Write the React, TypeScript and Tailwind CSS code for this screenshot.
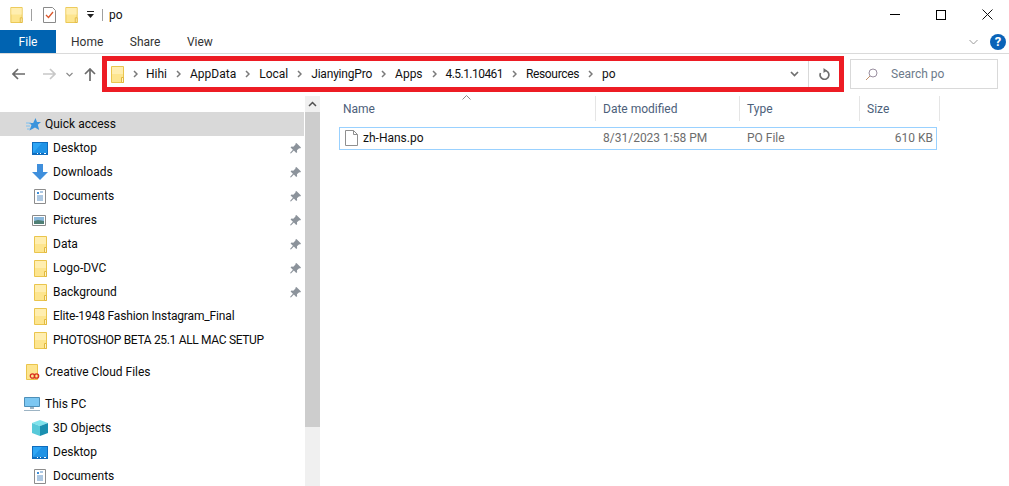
const font = "font-['Roboto',sans-serif]"

function Folder({ className = 'w-[13px] h-[17px]' }: { className?: string }) {
  return (
    <svg viewBox="0 0 13 17" className={`shrink-0 ${className}`}>
      <path d="M.5.5h12v16H.5z" fill="#fde58f" stroke="#eac54d" />
      <path d="M1 1h11v7H1z" fill="#ffeeb0" />
      <path d="M10.500 16.500v-5h2v5z" fill="#fff3c4" stroke="#e2b93e" />
    </svg>
  )
}

function Chevron() {
  return (
    <svg viewBox="0 0 5 8" className="w-[5px] h-[8px] shrink-0">
      <path d="M1 1l3 3-3 3" fill="none" stroke="#7a7a7a" strokeWidth="1.500" />
    </svg>
  )
}

function Pin() {
  return (
    <svg viewBox="0 0 12 12" className="w-[11px] h-[11px] shrink-0">
      <path d="M7 0l5 5-1 1-1-.4L7.600 8l.2 2-1 1-2.600-2.800L1 11.500 0 11l3.200-3.600L.6 4.800l1-1 2 .2L6 1.600 5.800.8z" fill="#8c939b" />
    </svg>
  )
}

function DesktopIcon() {
  return (
    <svg viewBox="0 0 16 13" className="w-[16px] h-[13px] shrink-0">
      <path d="M0 0h16v13H0z" fill="#0f6cbd" />
      <path d="M1 1h14v10H1z" fill="#2ea6f5" />
      <path d="M1 11L10 1h5v10z" fill="#1f93e6" />
      <path d="M5 11.500h1M8 11.500h1M12 11.500h2" stroke="#fff" />
    </svg>
  )
}

function DownloadsIcon() {
  return (
    <svg viewBox="0 0 16 16" className="w-[16px] h-[16px] shrink-0">
      <path d="M5 0h6v8h5l-8 8-8-8h5z" fill="#3f8fdc" />
    </svg>
  )
}

function DocumentsIcon() {
  return (
    <svg viewBox="0 0 12 15" className="w-[12px] h-[15px] shrink-0 ml-[2px]">
      <path d="M.5.5h11v14H.5z" fill="#fff" stroke="#8c8c8c" />
      <path d="M3 3h2v2H3z" fill="#3d8ed8" />
      <path d="M6 3h3M3 7h6M3 9h6M3 11h6" stroke="#5b90c4" />
    </svg>
  )
}

function PicturesIcon() {
  return (
    <svg viewBox="0 0 14 11" className="w-[14px] h-[11px] shrink-0">
      <path d="M.5.5h13v10H.5z" fill="#fff" stroke="#8a8a8a" />
      <path d="M2 2h10v4H2z" fill="#8ab8dc" />
      <path d="M2 6l4-1 6 1v3H2z" fill="#4f7f74" />
    </svg>
  )
}

function QuickIcon() {
  return (
    <svg viewBox="0 0 15 13" className="w-[15px] h-[13px] shrink-0 ml-[2px]">
      <path d="M9.500 0l1.500 4h4l-3.200 2.800L13.200 12 9 9.400 3.500 12.500l2-5.500L3 5h4.200z" fill="#3b94dc" />
      <path d="M0 5h5M0 8h4M1 11h3" stroke="#7cc0f0" />
    </svg>
  )
}

function CloudFolderIcon() {
  return (
    <svg viewBox="0 0 14 16" className="w-[14px] h-[16px] shrink-0 ml-[2px]">
      <path d="M.5.5h11v15H.5z" fill="#fde58f" stroke="#eac54d" />
      <circle cx="6.500" cy="12" r="2.200" fill="none" stroke="#d9301f" strokeWidth="1.300" />
      <circle cx="10.500" cy="12" r="2.200" fill="none" stroke="#d9301f" strokeWidth="1.300" />
    </svg>
  )
}

function PcIcon() {
  return (
    <svg viewBox="0 0 16 14" className="w-[16px] h-[14px] shrink-0">
      <path d="M.5.5h15v9H.5z" fill="#7cc7f2" stroke="#4d8fb8" />
      <path d="M6 10h4v2H6z" fill="#9db4c4" />
      <path d="M0 13.500h16" stroke="#9db4c4" />
    </svg>
  )
}

function CubeIcon() {
  return (
    <svg viewBox="0 0 16 16" className="w-[16px] h-[16px] shrink-0">
      <path d="M8 0l8 3-8 3-8-3z" fill="#7fe3ec" />
      <path d="M0 3l8 3v10l-8-3z" fill="#57c9d9" />
      <path d="M16 3L8 6v10l8-3z" fill="#1a8fb0" />
    </svg>
  )
}

function NavRow({ icon, label, pinned, active, indent = true, tight = '' }: { icon: React.ReactNode; label: string; pinned?: boolean; active?: boolean; indent?: boolean; tight?: string }) {
  return (
    <div className={`flex items-center h-6 shrink-0 ${active ? 'bg-[#d9d9d9]' : ''} ${indent ? 'pl-[32px]' : 'pl-[24px]'} pr-[3px]`}>
      <div className="w-[21px] flex justify-start items-center">{icon}</div>
      <span className={`flex-1 whitespace-nowrap text-[#0b0b0b] ${tight}`}>{label}</span>
      {pinned && <Pin />}
    </div>
  )
}

const folderIcon = <Folder className="w-[13px] h-[17px] ml-[2px]" />

function Sidebar() {
  return (
    <div className="w-[320px] shrink-0 flex overflow-hidden">
      <div className="w-[304px] flex flex-col pt-[16px] overflow-hidden">
        <NavRow icon={<QuickIcon />} label="Quick access" active indent={false} />
        <NavRow icon={<DesktopIcon />} label="Desktop" pinned />
        <NavRow icon={<DownloadsIcon />} label="Downloads" pinned />
        <NavRow icon={<DocumentsIcon />} label="Documents" pinned />
        <NavRow icon={<PicturesIcon />} label="Pictures" pinned />
        <NavRow icon={folderIcon} label="Data" pinned />
        <NavRow icon={folderIcon} label="Logo-DVC" pinned />
        <NavRow icon={folderIcon} label="Background" pinned />
        <NavRow icon={folderIcon} label="Elite-1948 Fashion Instagram_Final" tight="tracking-[-0.15px]" />
        <NavRow icon={folderIcon} label="PHOTOSHOP BETA 25.1 ALL MAC SETUP" tight="tracking-[-0.33px]" />
        <div className="h-2 shrink-0" />
        <NavRow icon={<CloudFolderIcon />} label="Creative Cloud Files" indent={false} />
        <div className="h-2 shrink-0" />
        <NavRow icon={<PcIcon />} label="This PC" indent={false} />
        <NavRow icon={<CubeIcon />} label="3D Objects" />
        <NavRow icon={<DesktopIcon />} label="Desktop" />
        <NavRow icon={<DocumentsIcon />} label="Documents" />
      </div>
      <div className="ml-px w-[15px] bg-[#f0f0f0] flex flex-col">
        <div className="h-4 flex items-center justify-center">
          <svg viewBox="0 0 9 6" className="w-[9px] h-[6px]">
            <path d="M1 5l3.500-3.500L8 5" fill="none" stroke="#505050" strokeWidth="1.500" />
          </svg>
        </div>
        <div className="h-[315px] bg-[#cdcdcd]" />
      </div>
    </div>
  )
}

const columns = [
  { label: 'Date modified', width: 'w-[144px]' },
  { label: 'Type', width: 'w-[120px]' },
  { label: 'Size', width: 'w-[80px]' },
]

function FileList() {
  return (
    <div className="flex-1 flex flex-col pl-[19px] min-w-0">
      <div className="relative flex h-[25px] text-[#4c607a]">
        <div className="w-[257px] pl-[4px] pt-[5px] border-r border-[#e5e5e5]">Name</div>
        {columns.map((col) => (
          <div key={col.label} className={`${col.width} pl-[7px] pt-[5px] border-r border-[#e5e5e5]`}>{col.label}</div>
        ))}
        <svg viewBox="0 0 9 5" className="absolute left-[123px] top-[-1px] w-[9px] h-[5px]">
          <path d="M.5 4.500l4-4 4 4" fill="none" stroke="#8c8c8c" />
        </svg>
      </div>
      <div className="mt-[6px] w-[598px] h-[23px] border border-[#99d1ff] flex items-center pb-[1px] text-[#6d6d6d]">
        <div className="w-[256px] flex items-center pl-[5px] text-[#111]">
          <svg viewBox="0 0 13 16" className="w-[13px] h-[16px] mr-[5px]">
            <path d="M.5.5h8l4 4v11H.500z" fill="#fff" stroke="#8f8f8f" />
            <path d="M8.500.5v4h4" fill="none" stroke="#8f8f8f" />
          </svg>
          zh-Hans.po
        </div>
        <div className="w-[144px] pl-[7px]">8/31/2023 1:58 PM</div>
        <div className="w-[120px] pl-[7px]">PO File</div>
        <div className="w-[73px] text-right">610 KB</div>
      </div>
    </div>
  )
}

const crumbs = [
  { label: 'Hihi', tight: '' },
  { label: 'AppData', tight: '' },
  { label: 'Local', tight: '' },
  { label: 'JianyingPro', tight: 'tracking-[-0.2px]' },
  { label: 'Apps', tight: '' },
  { label: '4.5.1.10461', tight: 'tracking-[-0.55px]' },
  { label: 'Resources', tight: 'tracking-[-0.35px]' },
  { label: 'po', tight: '' },
]

function AddressRow() {
  return (
    <div className="flex items-center h-[42px] pb-[2px] shrink-0">
      <div className="w-[102px] flex items-center pl-[12px] shrink-0">
        <svg viewBox="0 0 13 12" className="w-[13px] h-[12px]">
          <path d="M6 1L1 6l5 5M1 6h12" fill="none" stroke="#6b6b6b" strokeWidth="1.700" />
        </svg>
        <svg viewBox="0 0 13 12" className="w-[13px] h-[12px] ml-[18px]">
          <path d="M7 1l5 5-5 5M12 6H0" fill="none" stroke="#c8c8c8" strokeWidth="1.700" />
        </svg>
        <svg viewBox="0 0 7 5" className="w-[7px] h-[5px] ml-[10px]">
          <path d="M.5 1l3 3 3-3" fill="none" stroke="#8a8a8a" strokeWidth="1.200" />
        </svg>
        <svg viewBox="0 0 12 13" className="w-[12px] h-[13px] ml-[11px]">
          <path d="M1 6l5-5 5 5M6 1v12" fill="none" stroke="#6b6b6b" strokeWidth="1.700" />
        </svg>
      </div>
      <div className="w-[742px] h-[36px] border-[5px] border-[#ed1c24] flex items-center shrink-0 text-[#111]">
        <div className="pl-[4px] pr-[9px]"><Folder /></div>
        <div className="flex items-center gap-[9px] flex-1 whitespace-nowrap">
          <Chevron />
          <div className="flex items-center gap-[9px] ml-[-1px]">
            {crumbs.map((c, i) => (
              <div key={c.label} className="flex items-center gap-[9px]">
                <span className={c.tight}>{c.label}</span>
                {i < crumbs.length - 1 && <Chevron />}
              </div>
            ))}
          </div>
        </div>
        <svg viewBox="0 0 9 6" className="w-[9px] h-[6px] mr-[9px]">
          <path d="M1 1l3.500 3.500L8 1" fill="none" stroke="#6f6f6f" strokeWidth="1.700" />
        </svg>
        <div className="w-[31px] h-full border-l border-[#d9d9d9] flex items-center justify-center">
          <svg viewBox="0 0 11 12" className="w-[11px] h-[12px]">
            <path d="M5.500 2.500A4.400 4.400 0 1 1 1.500 5" fill="none" stroke="#6f6f6f" strokeWidth="1.700" />
            <path d="M4.500 0l3.500 2.500L4.500 5z" fill="#6f6f6f" />
          </svg>
        </div>
      </div>
      <div className="ml-[6px] w-[148px] h-[30px] border border-[#d9d9d9] flex items-center pl-[14px] text-[#6d7a8a] shrink-0">
        <svg viewBox="0 0 13 13" className="w-[13px] h-[13px] mr-[13px]">
          <circle cx="8" cy="5" r="4" fill="none" stroke="#9a8fa0" />
          <path d="M5 8l-4 4" stroke="#c08f6a" />
        </svg>
        Search po
      </div>
    </div>
  )
}

export default function App() {
  return (
    <div className={`w-[1009px] h-[486px] bg-white flex flex-col overflow-hidden text-[12px] leading-[16px] ${font}`}>
      {/* Title bar */}
      <div className="h-[30px] flex items-center shrink-0 pl-[10px] pb-[1px]">
        <Folder className="w-[13px] h-[16px]" />
        <div className="w-px h-[12px] bg-[#a0a0a0] ml-[8px]" />
        <svg viewBox="0 0 13 16" className="w-[13px] h-[16px] ml-[11px]">
          <path d="M.5.5h9l3 3v12H.500z" fill="#fff" stroke="#8a8a8a" />
          <path d="M3 8l2.500 2.500L10 5" fill="none" stroke="#d9562b" strokeWidth="1.300" />
        </svg>
        <div className="ml-[9px]"><Folder className="w-[13px] h-[16px]" /></div>
        <svg viewBox="0 0 7 7" className="w-[7px] h-[7px] ml-[9px]">
          <path d="M0 0h7v1H0zM0 3h7L3.500 7z" fill="#222" />
        </svg>
        <div className="w-px h-[12px] bg-[#a0a0a0] ml-[8px]" />
        <span className="ml-[6px] text-[#111]">po</span>
        <div className="ml-auto flex items-center mr-[-1px]">
          <div className="w-[46px] flex justify-center">
            <div className="w-[10px] h-px bg-black" />
          </div>
          <div className="w-[46px] flex justify-center">
            <div className="w-[10px] h-[10px] border border-black" />
          </div>
          <div className="w-[46px] flex justify-center">
            <svg viewBox="0 0 11 11" className="w-[11px] h-[11px]">
              <path d="M.5.5l10 10M10.500.5l-10 10" stroke="#111" />
            </svg>
          </div>
        </div>
      </div>
      {/* Ribbon tabs */}
      <div className="h-[24px] flex items-stretch shrink-0 border-b border-[#dadada] text-[#333]">
        <div className="w-[56px] h-[23px] bg-[#0063b1] text-white flex items-center justify-center">File</div>
        <div className="flex items-center gap-[26.5px] ml-[15px] h-[23px]">
          <span>Home</span>
          <span>Share</span>
          <span>View</span>
        </div>
        <div className="ml-auto flex items-center h-[23px] pr-[3px]">
          <svg viewBox="0 0 9 6" className="w-[9px] h-[6px] mr-[12px]">
            <path d="M.5 1l4 4 4-4" fill="none" stroke="#9a9a9a" />
          </svg>
          <div className="w-4 h-4 rounded-full bg-[#0a63b8] text-white flex items-center justify-center font-bold text-[13px]">?</div>
        </div>
      </div>
      <AddressRow />
      {/* Main */}
      <div className="flex-1 flex min-h-0">
        <Sidebar />
        <FileList />
      </div>
    </div>
  )
}
